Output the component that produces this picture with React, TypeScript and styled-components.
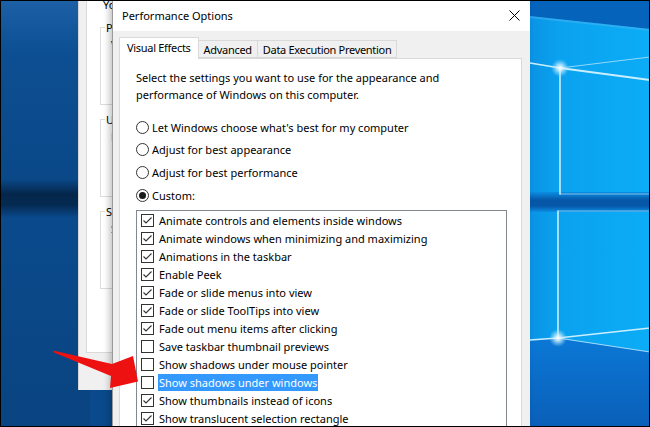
import React from 'react';
import styled, { createGlobalStyle } from 'styled-components';

const UI_FONT = `"Noto Sans", "Open Sans", sans-serif`;

const GlobalStyle = createGlobalStyle`
  html, body {
    margin: 0;
    padding: 0;
    background: #0a4a8c;
  }
  body {
    font-family: ${UI_FONT};
  }
`;

const Desktop = styled.div`
  position: relative;
  width: 650px;
  height: 427px;
  overflow: hidden;
  font-family: ${UI_FONT};
  font-size: 11px;
  color: #000;

  &::after {
    content: '';
    position: absolute;
    inset: 0;
    border: 1px solid #000;
    pointer-events: none;
    z-index: 20;
  }
`;

const Wallpaper = styled.svg`
  position: absolute;
  left: 0;
  top: 0;
  width: 650px;
  height: 427px;
`;

/* ---- the System Properties window behind (only its left edge shows) ---- */

const BackWindow = styled.div`
  position: absolute;
  left: 78px;
  top: -20px;
  width: 36px;
  height: 410px;
  background: #f0f0f0;
  border-left: 1px solid #d5d5d5;
  padding-left: 7px;
  box-sizing: border-box;
  overflow: hidden;
`;

const BackPage = styled.div`
  width: 140px;
  height: 373px;
  background: #fff;
  border: 1px solid #d9d9d9;
  padding: 15px 0 0 13px;
  box-sizing: border-box;
  display: flex;
  flex-direction: column;
  gap: 6px;
`;

const Note = styled.div`
  margin-left: 3px;
  line-height: 17px;
  white-space: nowrap;
`;

const GroupBox = styled.fieldset`
  margin: 0;
  height: 86px;
  box-sizing: border-box;
  border: 1px solid #dcdcdc;
  padding: 0;
  line-height: 17px;
  white-space: nowrap;
`;

const GroupTitle = styled.legend`
  padding: 0 1px;
  margin-left: 4px;
  line-height: 17px;
`;

const GroupText = styled.div`
  padding-left: 10px;
`;

/* ---- Performance Options dialog ---- */

const Dialog = styled.div`
  position: absolute;
  left: 112px;
  top: -1px;
  width: 418px;
  height: 450px;
  background: #f0f0f0;
  border-left: 1px solid #9a9a9a;
  box-shadow: -3px 0 6px rgba(0, 0, 0, 0.22);
  box-sizing: border-box;
  display: flex;
  flex-direction: column;
  z-index: 2;
`;

const TitleBar = styled.div`
  height: 32px;
  flex: none;
  background: #fff;
  display: flex;
  align-items: center;
  justify-content: space-between;
  padding: 1px 10px 0 9px;
  box-sizing: border-box;
`;

const CloseButton = styled.button`
  width: 12px;
  height: 12px;
  padding: 0;
  border: none;
  background: none;
  display: flex;
  align-items: center;
  justify-content: center;
`;

const Body = styled.div`
  flex: 1;
  padding: 6px 8px 0 6px;
  display: flex;
  flex-direction: column;
`;

const TabRow = styled.div`
  display: flex;
  align-items: flex-end;
  height: 21px;
`;

const Tab = styled.div<{ $active?: boolean }>`
  position: relative;
  box-sizing: border-box;
  height: ${(p) => (p.$active ? '22px' : '18px')};
  margin-bottom: ${(p) => (p.$active ? '-1px' : '0')};
  padding: ${(p) => (p.$active ? '0 7px 2px 7px' : '0 5px')};
  background: ${(p) => (p.$active ? '#fff' : '#f0f0f0')};
  border: 1px solid #d9d9d9;
  border-bottom: ${(p) => (p.$active ? 'none' : '1px solid #d9d9d9')};
  margin-left: ${(p) => (p.$active ? '0' : '-1px')};
  letter-spacing: -0.3px;
  display: flex;
  align-items: center;
  white-space: nowrap;
  z-index: ${(p) => (p.$active ? 1 : 0)};
`;

const Panel = styled.div`
  flex: 1;
  background: #fff;
  border: 1px solid #d9d9d9;
  padding: 10px 14px 0 16px;
  display: flex;
  flex-direction: column;
`;

const Intro = styled.p`
  margin: 0;
  line-height: 17px;
`;

const RadioList = styled.div`
  margin-top: 13px;
  display: flex;
  flex-direction: column;
`;

const RadioRow = styled.label`
  display: flex;
  align-items: center;
  gap: 3px;
  height: 22.67px;
`;

const RadioCircle = styled.span<{ $checked?: boolean }>`
  width: 13px;
  height: 13px;
  box-sizing: border-box;
  border: 1px solid #333;
  border-radius: 50%;
  background: #fff;
  display: flex;
  align-items: center;
  justify-content: center;

  &::after {
    content: '';
    width: 7px;
    height: 7px;
    border-radius: 50%;
    background: ${(p) => (p.$checked ? '#1a1a1a' : 'transparent')};
  }
`;

const ListBox = styled.div`
  margin-top: 3px;
  flex: 1;
  border: 1px solid #828790;
  padding: 1px 0 0 4px;
  display: flex;
  flex-direction: column;
`;

const Item = styled.div`
  display: flex;
  align-items: center;
  height: 18px;
  flex: none;
`;

const Box = styled.span`
  width: 13px;
  height: 13px;
  box-sizing: border-box;
  border: 1px solid #333;
  background: #fff;
  display: flex;
  align-items: center;
  justify-content: center;
  flex: none;
`;

const ItemLabel = styled.span<{ $selected?: boolean }>`
  margin-left: 4px;
  padding: 0 1px;
  line-height: 17px;
  white-space: nowrap;
  background: ${(p) => (p.$selected ? '#3399ff' : 'transparent')};
  color: ${(p) => (p.$selected ? '#fff' : '#000')};
`;

const Pointer = styled.svg`
  position: absolute;
  left: 0;
  top: 0;
  width: 650px;
  height: 427px;
  z-index: 10;
  pointer-events: none;
`;

const effects: { label: string; on: boolean; selected?: boolean }[] = [
  { label: 'Animate controls and elements inside windows', on: true },
  { label: 'Animate windows when minimizing and maximizing', on: true },
  { label: 'Animations in the taskbar', on: true },
  { label: 'Enable Peek', on: true },
  { label: 'Fade or slide menus into view', on: true },
  { label: 'Fade or slide ToolTips into view', on: true },
  { label: 'Fade out menu items after clicking', on: true },
  { label: 'Save taskbar thumbnail previews', on: false },
  { label: 'Show shadows under mouse pointer', on: false },
  { label: 'Show shadows under windows', on: false, selected: true },
  { label: 'Show thumbnails instead of icons', on: true },
  { label: 'Show translucent selection rectangle', on: true },
  { label: 'Show window contents while dragging', on: true },
];

const radios = [
  { label: "Let Windows choose what's best for my computer", checked: false },
  { label: 'Adjust for best appearance', checked: false },
  { label: 'Adjust for best performance', checked: false },
  { label: 'Custom:', checked: true },
];

function Check() {
  return (
    <svg width="11" height="11" viewBox="0 0 11 11">
      <polyline points="1.5,5.5 4,8 9.5,2.5" fill="none" stroke="#333" strokeWidth="1.1" />
    </svg>
  );
}

function DesktopArt() {
  return (
    <Wallpaper viewBox="0 0 650 427">
      <defs>
        <linearGradient id="leftG" x1="0" y1="0" x2="0" y2="1">
          <stop offset="0" stopColor="#1d60a6" />
          <stop offset="0.12" stopColor="#0d4f93" />
          <stop offset="0.42" stopColor="#0a4888" />
          <stop offset="0.455" stopColor="#04264a" />
          <stop offset="0.48" stopColor="#052a52" />
          <stop offset="0.51" stopColor="#0a4a8c" />
          <stop offset="1" stopColor="#0a4481" />
        </linearGradient>
        <linearGradient id="paneG" x1="0" y1="0" x2="1" y2="0">
          <stop offset="0" stopColor="#0b8ee2" />
          <stop offset="0.3" stopColor="#0aa2ef" />
          <stop offset="1" stopColor="#0cacf6" />
        </linearGradient>
        <linearGradient id="bandG" x1="0" y1="0" x2="0" y2="1">
          <stop offset="0" stopColor="#0a8ee2" />
          <stop offset="0.4" stopColor="#0757a8" />
          <stop offset="0.7" stopColor="#0757a8" />
          <stop offset="1" stopColor="#0a90e4" />
        </linearGradient>
        <linearGradient id="floorG" x1="0" y1="0" x2="0" y2="1">
          <stop offset="0" stopColor="#0b78d6" />
          <stop offset="1" stopColor="#0a5fb8" />
        </linearGradient>
        <radialGradient id="glow">
          <stop offset="0" stopColor="#ffffff" stopOpacity="1" />
          <stop offset="0.35" stopColor="#d8f2ff" stopOpacity="0.8" />
          <stop offset="1" stopColor="#8fdcff" stopOpacity="0" />
        </radialGradient>
      </defs>
      <rect x="0" y="0" width="90" height="427" fill="url(#leftG)" />
      <rect x="520" y="0" width="130" height="427" fill="url(#paneG)" />
      <polygon points="520,0 650,0 650,29 520,15" fill="#0563bb" />
      <line x1="520" y1="16" x2="650" y2="30" stroke="#4db6f2" strokeWidth="2" opacity="0.5" />
      <rect x="520" y="192" width="130" height="20" fill="url(#bandG)" />
      <polygon points="520,341 558,338 650,352 650,427 520,427" fill="url(#floorG)" />
      <g stroke="#c9efff" strokeLinecap="round">
        <line x1="560" y1="68" x2="560" y2="194" strokeWidth="1.6" />
        <line x1="560" y1="194" x2="650" y2="194" strokeWidth="1" opacity="0.6" />
        <line x1="530" y1="63" x2="560" y2="68" strokeWidth="1.6" />
        <line x1="560" y1="68" x2="650" y2="80" strokeWidth="1.8" />
        <line x1="560" y1="68" x2="650" y2="57" strokeWidth="1" opacity="0.7" />
        <line x1="559" y1="211" x2="650" y2="211" strokeWidth="1" opacity="0.6" />
        <line x1="558" y1="211" x2="558" y2="338" strokeWidth="1.6" />
        <line x1="530" y1="340" x2="558" y2="338" strokeWidth="1.6" />
        <line x1="558" y1="338" x2="650" y2="328" strokeWidth="1.6" />
        <line x1="558" y1="338" x2="650" y2="352" strokeWidth="1.2" opacity="0.8" />
      </g>
      <circle cx="560" cy="68" r="9" fill="url(#glow)" />
      <circle cx="558" cy="338" r="9" fill="url(#glow)" />
    </Wallpaper>
  );
}

export default function App() {
  return (
    <Desktop>
      <GlobalStyle />
      <DesktopArt />

      <BackWindow>
        <BackPage>
          <Note>You must be logged on as an Administrator to make most of these changes.</Note>
          <GroupBox>
            <GroupTitle>Performance</GroupTitle>
            <GroupText>Visual effects, processor scheduling, memory usage, and virtual memory</GroupText>
          </GroupBox>
          <GroupBox>
            <GroupTitle>User Profiles</GroupTitle>
            <GroupText>Desktop settings related to your sign-in</GroupText>
          </GroupBox>
          <GroupBox>
            <GroupTitle>Startup and Recovery</GroupTitle>
            <GroupText>System startup, system failure, and debugging information</GroupText>
          </GroupBox>
        </BackPage>
      </BackWindow>

      <Dialog>
        <TitleBar>
          <span>Performance Options</span>
          <CloseButton aria-label="Close">
            <svg width="11" height="11" viewBox="0 0 11 11">
              <path d="M0.5 0.5 L10.5 10.5 M10.5 0.5 L0.5 10.5" stroke="#000" strokeWidth="1" />
            </svg>
          </CloseButton>
        </TitleBar>
        <Body>
          <TabRow>
            <Tab $active>Visual Effects</Tab>
            <Tab>Advanced</Tab>
            <Tab>Data Execution Prevention</Tab>
          </TabRow>
          <Panel>
            <Intro>
              Select the settings you want to use for the appearance and
              <br />
              performance of Windows on this computer.
            </Intro>
            <RadioList>
              {radios.map((r) => (
                <RadioRow key={r.label}>
                  <RadioCircle $checked={r.checked} />
                  {r.label}
                </RadioRow>
              ))}
            </RadioList>
            <ListBox>
              {effects.map((e) => (
                <Item key={e.label}>
                  <Box>{e.on && <Check />}</Box>
                  <ItemLabel $selected={e.selected}>{e.label}</ItemLabel>
                </Item>
              ))}
            </ListBox>
          </Panel>
        </Body>
      </Dialog>

      <Pointer viewBox="0 0 650 427">
        <polygon
          points="53,350.5 112,364 133,356 138,381.5 110,388 111,376 54,352.5"
          fill="#ee1111"
        />
      </Pointer>
    </Desktop>
  );
}
